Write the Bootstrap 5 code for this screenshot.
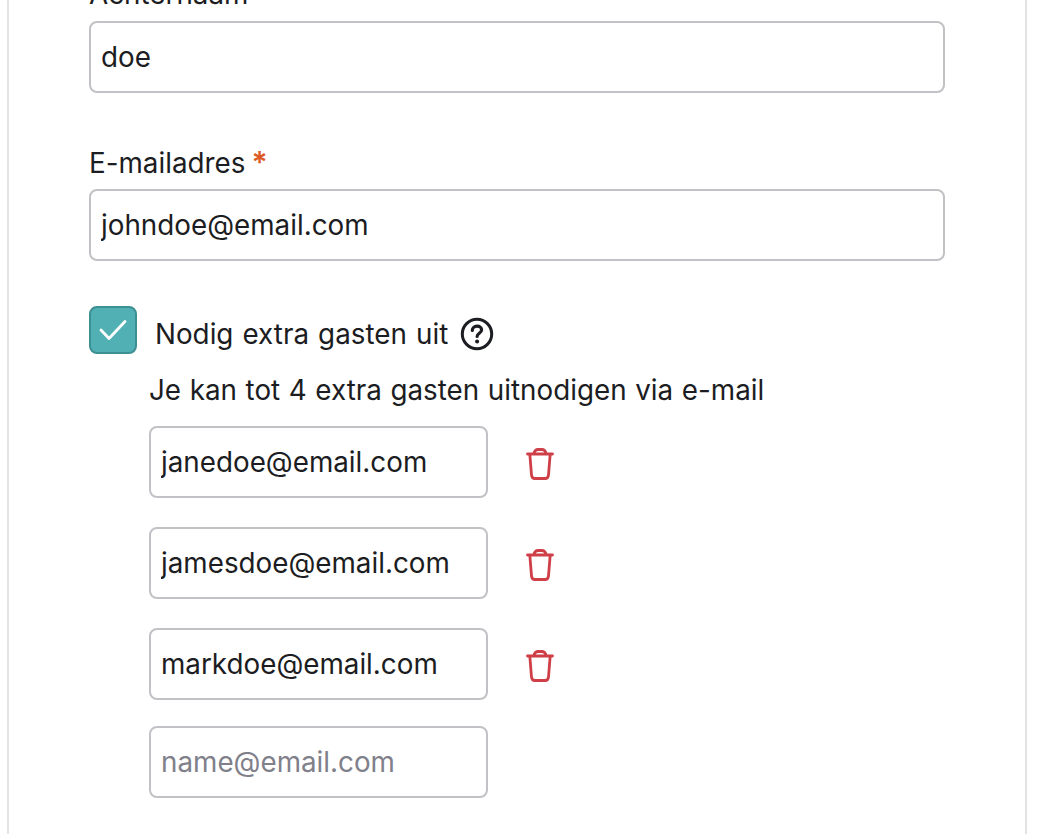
<!DOCTYPE html>
<html lang="nl">
<head>
<meta charset="utf-8">
<title>Formulier</title>
<link rel="stylesheet" href="https://cdn.jsdelivr.net/npm/bootstrap@5.3.0/dist/css/bootstrap.min.css">
<style>
html,body{height:834px;overflow:hidden;background:#fff}
body{font-family:Inter,"Liberation Sans",sans-serif;color:#1c1d22}
.sheet{width:1020px;margin:-19px 0 0 7px;height:853px;border:solid #e3e3e5;border-width:0 2px;padding:0 80px;overflow:hidden}
.fld-label{font-size:27.8px;line-height:26px;height:40px;display:block}
.fld-label.tight{line-height:38px;height:40px;margin-bottom:6px}
.req{color:#dc5a24;margin-left:6px;font-weight:600;font-size:30px}
.fld{height:72px;border:2px solid #c2c2c6;border-radius:8px;font-size:27.8px;color:#1c1d22;padding:0 10px;box-shadow:none}
.fld::placeholder{color:#80808a;opacity:1}
.wide{width:856px}
.block1{margin-bottom:50px}
.block2{margin-bottom:45px}
.chk{width:48px;height:48px;background:#51b0b3;border:2px solid #3c8f93;border-radius:8px;flex:none;margin-right:18px}
.chk-row{height:48px;font-size:27.8px;word-spacing:1.3px}
.chk-text{padding-top:9px}
.hlp{margin:8px 0 0 12px;flex:none}
.sub{margin-left:60px}
.sub-text{font-size:27.8px;line-height:40px;margin:16px 0 16px;word-spacing:.8px}
.gst{width:339px}
.gst-row{margin-bottom:29px}
.gst-row.last{margin-bottom:0}
.gst-row.third{margin-bottom:26px}
.bin{margin:4px 0 0 38px;flex:none}
</style>
</head>
<body>
<main class="sheet">
  <form>
    <div class="block1">
      <label class="fld-label" for="a">Achternaam</label>
      <input id="a" class="form-control fld wide" value="doe">
    </div>
    <div class="block2">
      <label class="fld-label tight" for="b">E-mailadres<span class="req">*</span></label>
      <input id="b" class="form-control fld wide" value="johndoe@email.com">
    </div>
    <div class="d-flex align-items-center chk-row">
      <span class="chk d-flex align-items-center justify-content-center">
        <svg width="30" height="24" viewBox="0 0 30 24" fill="none"><path d="M3 12 11 20.500 27 3.500" stroke="#fff" stroke-width="2.800" stroke-linecap="round" stroke-linejoin="round"/></svg>
      </span>
      <span class="chk-text">Nodig extra gasten uit</span>
      <svg class="hlp" width="34" height="34" viewBox="0 0 34 34" fill="none"><circle cx="17" cy="17" r="14.700" stroke="#1c1d22" stroke-width="3"/><path d="M12.300 13.500c0-2.700 2-4.300 4.700-4.300 2.700 0 4.600 1.600 4.600 3.900 0 3.200-4.500 3.200-4.500 6.300" stroke="#1c1d22" stroke-width="3.200" stroke-linecap="round"/><circle cx="17.100" cy="24.500" r="2" fill="#1c1d22"/></svg>
    </div>
    <div class="sub">
      <p class="sub-text">Je kan tot 4 extra gasten uitnodigen via e-mail</p>
      <div class="d-flex align-items-center gst-row">
        <input class="form-control fld gst" value="janedoe@email.com" aria-label="Gast 1">
        <svg class="bin" width="28" height="32" viewBox="0 0 28 32" fill="none" stroke="#cf3f48" stroke-width="2.800" stroke-linecap="round" stroke-linejoin="round"><path d="M1.500 6h25M3.800 6l1.700 20.800c.2 2.400 1.300 3.700 3.300 3.700h10.400c2 0 3.100-1.300 3.300-3.700L24.200 6M7.800 6c.5-3 2.300-4.500 4.500-4.500h3.400c2.200 0 4 1.500 4.500 4.500"/></svg>
      </div>
      <div class="d-flex align-items-center gst-row">
        <input class="form-control fld gst" value="jamesdoe@email.com" aria-label="Gast 2">
        <svg class="bin" width="28" height="32" viewBox="0 0 28 32" fill="none" stroke="#cf3f48" stroke-width="2.800" stroke-linecap="round" stroke-linejoin="round"><path d="M1.500 6h25M3.800 6l1.700 20.800c.2 2.400 1.300 3.700 3.300 3.700h10.400c2 0 3.100-1.300 3.300-3.700L24.200 6M7.800 6c.5-3 2.300-4.500 4.500-4.500h3.400c2.200 0 4 1.500 4.500 4.500"/></svg>
      </div>
      <div class="d-flex align-items-center gst-row third">
        <input class="form-control fld gst" value="markdoe@email.com" aria-label="Gast 3">
        <svg class="bin" width="28" height="32" viewBox="0 0 28 32" fill="none" stroke="#cf3f48" stroke-width="2.800" stroke-linecap="round" stroke-linejoin="round"><path d="M1.500 6h25M3.800 6l1.700 20.800c.2 2.400 1.300 3.700 3.300 3.700h10.400c2 0 3.100-1.300 3.300-3.700L24.200 6M7.800 6c.5-3 2.300-4.500 4.500-4.500h3.400c2.200 0 4 1.500 4.500 4.500"/></svg>
      </div>
      <div class="d-flex align-items-center gst-row last">
        <input class="form-control fld gst" placeholder="name@email.com" aria-label="Gast 4">
      </div>
    </div>
  </form>
</main>
<script src="https://cdn.jsdelivr.net/npm/bootstrap@5.3.0/dist/js/bootstrap.bundle.min.js"></script>
</body>
</html>
